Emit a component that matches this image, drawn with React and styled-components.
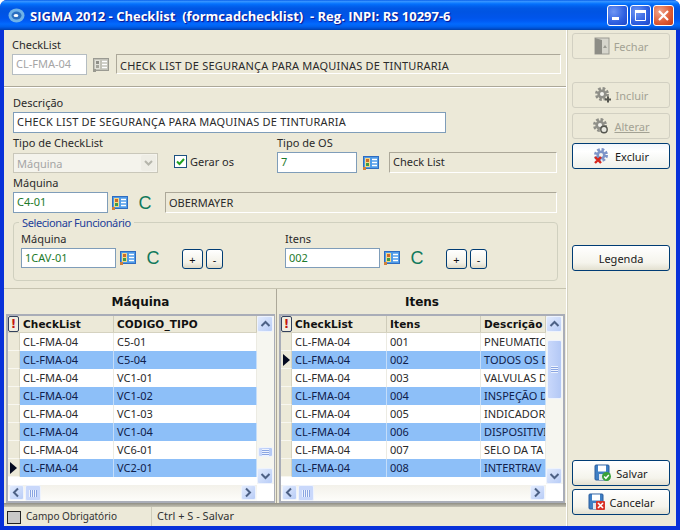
import React from "react";
import styled, { createGlobalStyle } from "styled-components";

const UI_FONT = `"Noto Sans", "DejaVu Sans", sans-serif`;
const BOLD_FONT = `"DejaVu Sans", "Noto Sans", sans-serif`;
const PANEL = "#ece9d8";

const GlobalStyle = createGlobalStyle`
  html, body {
    margin: 0;
    padding: 0;
    background: #fff;
  }
  * {
    box-sizing: border-box;
  }
`;

const Window = styled.div`
  width: 680px;
  height: 530px;
  display: flex;
  flex-direction: column;
  overflow: hidden;
  border-radius: 7px 7px 0 0;
  background: #0831d9;
  font-family: ${UI_FONT};
  font-size: 11px;
  color: #2a2a2a;
`;

const TitleBar = styled.div`
  height: 30px;
  flex: none;
  display: flex;
  align-items: center;
  padding: 1px 6px 0 8px;
  background: linear-gradient(
    180deg,
    #0058e6 0,
    #3a93ff 4%,
    #288eff 7%,
    #127dff 10%,
    #036ffc 14%,
    #0262ee 20%,
    #0057e5 28%,
    #0054e3 40%,
    #0055eb 60%,
    #005bf5 70%,
    #026afe 80%,
    #0062ef 88%,
    #0052d6 94%,
    #0040ab 100%
  );
`;

const TitleText = styled.div`
  margin-left: 5px;
  flex: 1;
  font-family: "Open Sans", sans-serif;
  font-weight: 700;
  font-size: 13px;
  white-space: pre;
  color: #fff;
  text-shadow: 1px 1px 1px #0f1089;
`;

const WinButton = styled.div`
  width: 21px;
  height: 21px;
  margin-left: 2px;
  border: 1px solid #fff;
  border-radius: 3px;
  display: flex;
  align-items: center;
  justify-content: center;
  background: ${(props) =>
    props.close
      ? "radial-gradient(circle at 30% 30%, #f0a58c, #dd5a33 60%, #c13a1a)"
      : "radial-gradient(circle at 30% 30%, #6f96f3, #2e5fe0 60%, #1f47c8)"};
`;

const Body = styled.div`
  height: 496px;
  margin: 0 4px;
  display: flex;
  background: ${PANEL};
`;

const Main = styled.div`
  width: 562px;
  display: flex;
  flex-direction: column;
`;

const Side = styled.div`
  width: 110px;
  padding: 3px 6px 11px 5px;
  display: flex;
  flex-direction: column;
  border-left: 1px solid #fff;
  box-shadow: inset 1px 0 0 #d5d2c0;
`;

const TopPanel = styled.div`
  height: 57px;
  flex: none;
  padding: 9px 0 0 8px;
  border-bottom: 1px solid #aca899;
`;

const FormPanel = styled.div`
  height: 201px;
  flex: none;
  padding: 0 8px 0 9px;
  border-top: 1px solid #fff;
`;

const Row = styled.div`
  display: flex;
  align-items: ${(props) => props.align || "flex-end"};
  margin-top: ${(props) => props.top || 0}px;
`;

const Field = styled.div`
  display: flex;
  flex-direction: column;
  width: ${(props) => props.w}px;
  margin-left: ${(props) => props.left || 0}px;
`;

const Label = styled.div`
  height: ${(props) => props.h || 15}px;
  line-height: 12px;
  white-space: pre;
`;

const Input = styled.div`
  height: ${(props) => props.h || 21}px;
  width: ${(props) => (props.w ? `${props.w}px` : "100%")};
  padding-left: 3px;
  line-height: ${(props) => (props.h || 21) - 3}px;
  letter-spacing: ${(props) => (props.wide ? "0.2px" : "0")};
  white-space: nowrap;
  overflow: hidden;
  border: 1px solid ${(props) => (props.disabled ? "#b5bdc2" : "#7f9db9")};
  background: #fff;
  color: ${(props) =>
    props.disabled ? "#a5a5a5" : props.green ? "#1d7a2a" : "#2a2a2a"};
`;

const Display = styled.div`
  height: ${(props) => props.h || 20}px;
  flex: none;
  width: ${(props) => props.w}px;
  margin-left: ${(props) => props.left || 0}px;
  padding: ${(props) => props.drop || 0}px 0 0 3px;
  line-height: ${(props) => (props.h || 20) - 3}px;
  letter-spacing: ${(props) => (props.wide ? "0.2px" : "0")};
  white-space: nowrap;
  overflow: hidden;
  border: 1px solid;
  border-color: #aca899 #fff #fff #aca899;
`;

const SelectBox = styled.div`
  width: 145px;
  height: 20px;
  display: flex;
  align-items: center;
  justify-content: space-between;
  padding: 0 1px 0 3px;
  border: 1px solid #c9c7ba;
  background: #f4f3ec;
  color: #a5a5a5;
`;

const SelectArrow = styled.div`
  width: 15px;
  height: 16px;
  display: flex;
  align-items: center;
  justify-content: center;
  background: #eeede5;
  border-radius: 2px;
`;

const CheckWrap = styled.div`
  display: flex;
  align-items: center;
  gap: 3px;
  width: 103px;
  height: 20px;
  margin-left: 16px;
  padding-bottom: 3px;
`;

const CheckBox = styled.div`
  width: 13px;
  height: 13px;
  display: flex;
  align-items: center;
  justify-content: center;
  border: 1px solid #1c5180;
  background: #fff;
`;

const IconSlot = styled.div`
  width: 16px;
  height: 21px;
  flex: none;
  margin-left: ${(props) => props.left || 4}px;
  display: flex;
  align-items: center;
`;

const ClearC = styled.div`
  width: 14px;
  margin-left: 10px;
  height: 21px;
  flex: none;
  text-align: center;
  line-height: 22px;
  font-family: "Liberation Sans", sans-serif;
  font-size: 18px;
  color: #12795c;
`;

const GroupBox = styled.div`
  position: relative;
  height: 59px;
  width: 545px;
  margin-top: 9px;
  padding: 10px 0 0 7px;
  border: 1px solid #d0d0bf;
  border-radius: 4px;
  display: flex;
  align-items: flex-start;
`;

const GroupLegend = styled.div`
  position: absolute;
  top: -6px;
  left: 5px;
  padding: 0 3px;
  background: ${PANEL};
  line-height: 12px;
  letter-spacing: -0.4px;
  color: #23409a;
`;

const MiniButton = styled.div`
  width: ${(props) => props.w || 17}px;
  height: 20px;
  margin-left: ${(props) => props.left || 3}px;
  margin-bottom: -1px;
  flex: none;
  text-align: center;
  line-height: 20px;
  border: 1px solid #003c74;
  border-radius: 3px;
  background: linear-gradient(180deg, #fff 0, #f3f1e7 70%, #dcd8c6 100%);
  color: #111;
`;

const Grids = styled.div`
  height: 215px;
  flex: none;
  display: flex;
  padding-left: 1px;
  border-top: 1px solid #c6c3b0;
`;

const GridPanel = styled.div`
  width: ${(props) => props.w}px;
  flex: none;
  display: flex;
  flex-direction: column;
  padding: 0 1px;
  border-right: ${(props) => (props.divider ? "1px solid #aca899" : "none")};
  margin-right: ${(props) => (props.divider ? 1 : 0)}px;
`;

const GridTitle = styled.div`
  height: 25px;
  flex: none;
  line-height: 27px;
  text-align: center;
  font-family: ${BOLD_FONT};
  font-weight: 700;
  font-size: 12px;
  color: #111;
`;

const GridFrame = styled.div`
  height: 189px;
  flex: none;
  display: flex;
  background: #fff;
  border: 2px solid #a9adb8;
`;

const TableArea = styled.div`
  flex: 1;
  display: flex;
  flex-direction: column;
`;

const Table = styled.div`
  flex: 1;
  background: #fff;
`;

const HeaderRow = styled.div`
  height: 17px;
  display: grid;
  grid-template-columns: ${(props) => props.cols};
  background: ${PANEL};
  border-bottom: 1px solid #d5d2c0;
  font-family: ${BOLD_FONT};
  font-weight: 700;
  font-size: 10.5px;
  letter-spacing: 0.1px;
  line-height: 16px;
  color: #111;
`;

const HeaderCell = styled.div`
  padding-left: 3px;
  white-space: nowrap;
  overflow: hidden;
  border-right: 1px solid #cfccba;
`;

const AlertMark = styled.div`
  width: 11px;
  height: 16px;
  text-align: center;
  border: 1px solid #33415c;
  border-radius: 2px;
  font-size: 12px;
  line-height: 14px;
  color: #c4160f;
  background: #f0ede0;
`;

const DataRow = styled.div`
  height: 18px;
  display: grid;
  grid-template-columns: ${(props) => props.cols};
  line-height: 17px;
  background: ${(props) => (props.blue ? "#8dbff8" : "#fff")};
  color: ${(props) => (props.blue ? "#10204a" : "#2a2a2a")};
`;

const Indicator = styled.div`
  display: flex;
  align-items: center;
  padding-left: 2px;
  background: ${PANEL};
  border-bottom: 1px solid #f8f7f0;
  border-right: 1px solid #d5d2c0;
`;

const RowArrow = styled.div`
  width: 0;
  height: 0;
  border-top: 6px solid transparent;
  border-bottom: 6px solid transparent;
  border-left: 7px solid #050a20;
`;

const Cell = styled.div`
  padding-left: 3px;
  white-space: nowrap;
  overflow: hidden;
  border-right: 1px solid ${(props) => (props.blue ? "#c4ddf9" : "#ecebe3")};
`;

const ScrollV = styled.div`
  width: 17px;
  flex: none;
  display: flex;
  flex-direction: column;
  background: #f6f6f0;
`;

const ScrollH = styled.div`
  height: 16px;
  flex: none;
  display: flex;
  padding: 0 1px;
  background: linear-gradient(180deg, #f3f1ea, #fdfdfa);
`;

const ScrollButton = styled.div`
  width: ${(props) => props.w}px;
  height: ${(props) => props.h}px;
  flex: none;
  display: flex;
  align-items: center;
  justify-content: center;
  border: 1px solid #eef3fd;
  border-radius: 2px;
  background: linear-gradient(135deg, #e2ebfd, #b9cdf7);
`;

const ScrollTrackV = styled.div`
  flex: 1;
  padding-top: ${(props) => props.offset}px;
`;

const ScrollCorner = styled.div`
  height: 17px;
  flex: none;
  background: #fff;
`;

const ThumbV = styled.div`
  width: 15px;
  height: ${(props) => props.size}px;
  margin-left: 1px;
  display: flex;
  align-items: center;
  justify-content: center;
  border: 1px solid #eef3fd;
  border-radius: 2px;
  background: linear-gradient(90deg, #c9d8fb, #b3c8f5);
`;

const ThumbH = styled.div`
  width: 16px;
  height: 16px;
  margin-left: 1px;
  flex: none;
  display: flex;
  align-items: center;
  justify-content: center;
  border: 1px solid #eef3fd;
  border-radius: 2px;
  background: #c9d8fb;
`;

const GripH = styled.div`
  width: 8px;
  height: 7px;
  background: repeating-linear-gradient(
    90deg,
    #eef3fd 0 1px,
    #8aa5e2 1px 2px
  );
`;

const Grip = styled.div`
  width: 7px;
  height: 7px;
  background: repeating-linear-gradient(
    180deg,
    #eef3fd 0 1px,
    #8aa5e2 1px 2px
  );
`;

const Spacer = styled.div`
  flex: 1;
`;

const GrayBar = styled.div`
  height: 4px;
  flex: none;
  background: linear-gradient(180deg, #8f8e84, #c5c3b4);
`;

const StatusBar = styled.div`
  flex: 1;
  display: flex;
  align-items: center;
  padding-left: 3px;
`;

const Swatch = styled.div`
  width: 14px;
  height: 13px;
  margin-top: 2px;
  border: 1px solid #222;
  background: #c8c8c8;
`;

const StatusText = styled.div`
  width: ${(props) => props.w}px;
  padding-left: ${(props) => props.pad}px;
  height: 19px;
  line-height: 18px;
  font-size: ${(props) => props.size || 11}px;
  white-space: nowrap;
  border-right: ${(props) => (props.sep ? "1px solid #cfccba" : "none")};
  color: #333;
`;

const ActionButton = styled.div`
  width: 98px;
  height: 26px;
  flex: none;
  margin-top: ${(props) => props.top || 0}px;
  display: flex;
  align-items: center;
  justify-content: center;
  gap: 4px;
  border: 1px solid ${(props) => (props.disabled ? "#d2d0c2" : "#003c74")};
  border-radius: 3px;
  background: ${(props) =>
    props.disabled
      ? PANEL
      : props.focused
      ? "linear-gradient(180deg, #f2f6fc 0, #fff 30%, #eef0ea 100%)"
      : "linear-gradient(180deg, #fff 0, #f5f4ec 70%, #e3e0d0 100%)"};
  color: ${(props) => (props.disabled ? "#a3a294" : "#1a1a1a")};
  text-decoration: ${(props) => (props.underline ? "underline" : "none")};
  cursor: default;
`;

const CardIcon = ({ muted }) => (
  <svg width="16" height="15" viewBox="0 0 16 15">
    <rect x="0.5" y="1.5" width="15" height="12" fill={muted ? "#c2c2b8" : "#4f9be8"} stroke={muted ? "#9a9a92" : "#2f6cc0"} />
    <rect x="2" y="3" width="5" height="9" fill={muted ? "#e2e2da" : "#f4d98a"} />
    <rect x="3" y="4" width="3" height="3" fill={muted ? "#8f8f88" : "#c86a2c"} />
    <rect x="3" y="8" width="3" height="3" fill={muted ? "#a5a59c" : "#3f9a48"} />
    <path d="M9 4.5h5M9 7.5h5M9 10.5h5" stroke="#fff" strokeWidth="1.4" />
    <rect x="0" y="12" width="3" height="3" fill={muted ? "#9a9a90" : "#d0803a"} />
  </svg>
);

const GearIcon = ({ color, badge }) => (
  <svg width="18" height="18" viewBox="0 0 18 18">
    <circle cx="8" cy="8" r="5.5" fill="none" stroke={color} strokeWidth="3" strokeDasharray="2.6 1.7" />
    <circle cx="8" cy="8" r="4.6" fill={color} />
    <circle cx="8" cy="8" r="2" fill="#f3f3ee" />
    {badge === "plus" && (
      <path d="M11 13.5h6M14 10.5v6" stroke="#55564f" strokeWidth="2" />
    )}
    {badge === "redo" && (
      <circle cx="12" cy="12.5" r="3.2" fill="#e8e8e0" stroke="#55564f" strokeWidth="1.4" />
    )}
    {badge === "x" && (
      <path d="M2 10l6 6M8 10l-6 6" stroke="#d8261c" strokeWidth="2.4" />
    )}
  </svg>
);

const DoorIcon = () => (
  <svg width="16" height="18" viewBox="0 0 16 18">
    <rect x="1" y="1" width="14" height="16" fill="#d6d5cc" stroke="#9a9a92" />
    <path d="M1 1l7 2v14l-7 0z" fill="#8d8d86" />
    <path d="M9 11l2-3 2 3z" fill="#9a9a92" />
  </svg>
);

const DiskIcon = ({ badge }) => (
  <svg width="18" height="18" viewBox="0 0 18 18">
    <rect x="1" y="1" width="14" height="15" rx="1" fill="#3f7fc4" stroke="#2a5d9c" />
    <rect x="4" y="1.5" width="8" height="6" fill="#fff" />
    <rect x="5" y="10" width="6" height="6" fill="#dfe6ee" />
    {badge === "ok" ? (
      <>
        <circle cx="12.5" cy="12.5" r="4.5" fill="#3aa13a" />
        <path d="M10.2 12.5l1.7 1.8 2.9-3.2" fill="none" stroke="#fff" strokeWidth="1.5" />
      </>
    ) : (
      <>
        <rect x="8" y="8" width="9" height="9" rx="1" fill="#d8352a" />
        <path d="M10 10l5 5M15 10l-5 5" stroke="#fff" strokeWidth="1.6" />
      </>
    )}
  </svg>
);

const AppIcon = () => (
  <svg width="17" height="15" viewBox="0 0 17 15">
    <ellipse cx="8.5" cy="7.5" rx="8" ry="7" fill="#6fb2e8" />
    <ellipse cx="8.5" cy="7.5" rx="5" ry="4" fill="#2a6fc0" />
    <ellipse cx="8" cy="7.5" rx="2.4" ry="1.6" fill="#fff" />
  </svg>
);

const Chevron = ({ dir }) => {
  const paths = {
    up: "M1.5 7l4-4 4 4",
    down: "M1.5 3l4 4 4-4",
    left: "M7 1.5l-4 4 4 4",
    right: "M3 1.5l4 4-4 4",
  };
  return (
    <svg width="11" height="11" viewBox="0 0 11 11">
      <path d={paths[dir]} fill="none" stroke="#4d6185" strokeWidth="2" />
    </svg>
  );
};

const CHECKLIST = "CL-FMA-04";
const LEFT_ROWS = ["C5-01", "C5-04", "VC1-01", "VC1-02", "VC1-03", "VC1-04", "VC6-01", "VC2-01"];
const RIGHT_ROWS = [
  ["001", "PNEUMATIC"],
  ["002", "TODOS OS D"],
  ["003", "VALVULAS D"],
  ["004", "INSPEÇÃO D"],
  ["005", "INDICADOR"],
  ["006", "DISPOSITIVI"],
  ["007", "SELO DA TA"],
  ["008", "INTERTRAV"],
];

const DataGrid = ({ cols, headers, rows, current, thumbOffset, thumbSize }) => (
  <GridFrame>
    <TableArea>
      <Table>
        <HeaderRow cols={cols}>
          <AlertMark>!</AlertMark>
          {headers.map((h) => (
            <HeaderCell key={h}>{h}</HeaderCell>
          ))}
        </HeaderRow>
        {rows.map((cells, i) => {
          const blue = i % 2 === 1;
          return (
            <DataRow key={i} cols={cols} blue={blue}>
              <Indicator>{i === current && <RowArrow />}</Indicator>
              {cells.map((c, j) => (
                <Cell key={j} blue={blue}>
                  {c}
                </Cell>
              ))}
            </DataRow>
          );
        })}
      </Table>
      <ScrollH>
        <ScrollButton w={15} h={15}>
          <Chevron dir="left" />
        </ScrollButton>
        <ThumbH>
          <GripH />
        </ThumbH>
        <Spacer />
        <ScrollButton w={15} h={15}>
          <Chevron dir="right" />
        </ScrollButton>
      </ScrollH>
    </TableArea>
    <ScrollV>
      <ScrollButton w={16} h={16}>
        <Chevron dir="up" />
      </ScrollButton>
      <ScrollTrackV offset={thumbOffset}>
        <ThumbV size={thumbSize}>
          <Grip />
        </ThumbV>
      </ScrollTrackV>
      <ScrollButton w={16} h={16}>
        <Chevron dir="down" />
      </ScrollButton>
      <ScrollCorner />
    </ScrollV>
  </GridFrame>
);

const App = () => {
  return (
    <Window>
      <GlobalStyle />
      <TitleBar>
        <AppIcon />
        <TitleText>{"SIGMA 2012 - Checklist  (formcadchecklist)  - Reg. INPI: RS 10297-6"}</TitleText>
        <WinButton>
          <svg width="13" height="13" viewBox="0 0 13 13">
            <rect x="1" y="8" width="7" height="3" fill="#fff" />
          </svg>
        </WinButton>
        <WinButton>
          <svg width="13" height="13" viewBox="0 0 13 13">
            <path d="M1.5 3.5h10v8h-10z" fill="none" stroke="#fff" />
            <rect x="1" y="1" width="11" height="3" fill="#fff" />
          </svg>
        </WinButton>
        <WinButton close>
          <svg width="13" height="13" viewBox="0 0 13 13">
            <path d="M2 2l9 9M11 2l-9 9" stroke="#fff" strokeWidth="2.2" />
          </svg>
        </WinButton>
      </TitleBar>
      <Body>
        <Main>
          <TopPanel>
            <Label>CheckList</Label>
            <Row align="flex-start">
              <Input w={75} disabled>
                CL-FMA-04
              </Input>
              <IconSlot left={6}>
                <CardIcon muted />
              </IconSlot>
              <Display left={7} w={445} drop={2} wide>
                CHECK LIST DE SEGURANÇA PARA MAQUINAS DE TINTURARIA
              </Display>
            </Row>
          </TopPanel>
          <FormPanel>
            <Row top={9}>
              <Field w={433}>
                <Label>Descrição</Label>
                <Input wide>CHECK LIST DE SEGURANÇA PARA MAQUINAS DE TINTURARIA</Input>
              </Field>
            </Row>
            <Row top={4}>
              <Field w={145}>
                <Label h={16}>Tipo de CheckList</Label>
                <SelectBox>
                  Máquina
                  <SelectArrow>
                    <svg width="9" height="7" viewBox="0 0 9 7">
                      <path d="M1 1l3.5 3.5L8 1" fill="none" stroke="#b5b5ab" strokeWidth="2" />
                    </svg>
                  </SelectArrow>
                </SelectBox>
              </Field>
              <CheckWrap>
                <CheckBox>
                  <svg width="11" height="11" viewBox="0 0 11 11">
                    <path d="M2 5.5l2.5 2.5L9 3" fill="none" stroke="#21a121" strokeWidth="2" />
                  </svg>
                </CheckBox>
                Gerar os
              </CheckWrap>
              <Field w={80}>
                <Label>Tipo de OS</Label>
                <Input green>7</Input>
              </Field>
              <IconSlot left={6}>
                <CardIcon />
              </IconSlot>
              <Display left={10} w={168} h={21}>
                Check List
              </Display>
            </Row>
            <Row top={4}>
              <Field w={95}>
                <Label>Máquina</Label>
                <Input green>C4-01</Input>
              </Field>
              <IconSlot>
                <CardIcon />
              </IconSlot>
              <ClearC>C</ClearC>
              <Display left={13} w={392} h={21} drop={1}>
                OBERMAYER
              </Display>
            </Row>
            <GroupBox>
              <GroupLegend>Selecionar Funcionário</GroupLegend>
              <Row>
                <Field w={95}>
                  <Label>Máquina</Label>
                  <Input green h={20}>1CAV-01</Input>
                </Field>
                <IconSlot>
                  <CardIcon />
                </IconSlot>
                <ClearC>C</ClearC>
                <MiniButton w={21} left={22}>
                  +
                </MiniButton>
                <MiniButton>-</MiniButton>
              </Row>
              <Row>
                <Field w={95} left={62}>
                  <Label>Itens</Label>
                  <Input green h={20}>002</Input>
                </Field>
                <IconSlot>
                  <CardIcon />
                </IconSlot>
                <ClearC>C</ClearC>
                <MiniButton w={21} left={22}>
                  +
                </MiniButton>
                <MiniButton>-</MiniButton>
              </Row>
            </GroupBox>
          </FormPanel>
          <Grids>
            <GridPanel w={272} divider>
              <GridTitle>Máquina</GridTitle>
              <DataGrid
                cols="12px 94px 143px"
                headers={["CheckList", "CODIGO_TIPO"]}
                rows={LEFT_ROWS.map((v) => [CHECKLIST, v])}
                current={7}
                thumbOffset={115}
                thumbSize={10}
              />
            </GridPanel>
            <GridPanel w={288}>
              <GridTitle>Itens</GridTitle>
              <DataGrid
                cols="11px 95px 94px 65px"
                headers={["CheckList", "Itens", "Descrição"]}
                rows={RIGHT_ROWS.map((r) => [CHECKLIST, r[0], r[1]])}
                current={1}
                thumbOffset={8}
                thumbSize={59}
              />
            </GridPanel>
          </Grids>
          <GrayBar />
          <StatusBar>
            <Swatch />
            <StatusText w={131} pad={5} size={10} sep>
              Campo Obrigatório
            </StatusText>
            <StatusText w={120} pad={5}>
              Ctrl + S - Salvar
            </StatusText>
          </StatusBar>
        </Main>
        <Side>
          <ActionButton disabled>
            <DoorIcon />
            Fechar
          </ActionButton>
          <ActionButton disabled top={23}>
            <GearIcon color="#8f8f88" badge="plus" />
            Incluir
          </ActionButton>
          <ActionButton disabled underline top={5}>
            <GearIcon color="#8f8f88" badge="redo" />
            Alterar
          </ActionButton>
          <ActionButton focused top={4}>
            <GearIcon color="#7d94c9" badge="x" />
            Excluir
          </ActionButton>
          <ActionButton top={76}>Legenda</ActionButton>
          <Spacer />
          <ActionButton>
            <DiskIcon badge="ok" />
            Salvar
          </ActionButton>
          <ActionButton top={3}>
            <DiskIcon badge="x" />
            Cancelar
          </ActionButton>
        </Side>
      </Body>
    </Window>
  );
};

export default App;
